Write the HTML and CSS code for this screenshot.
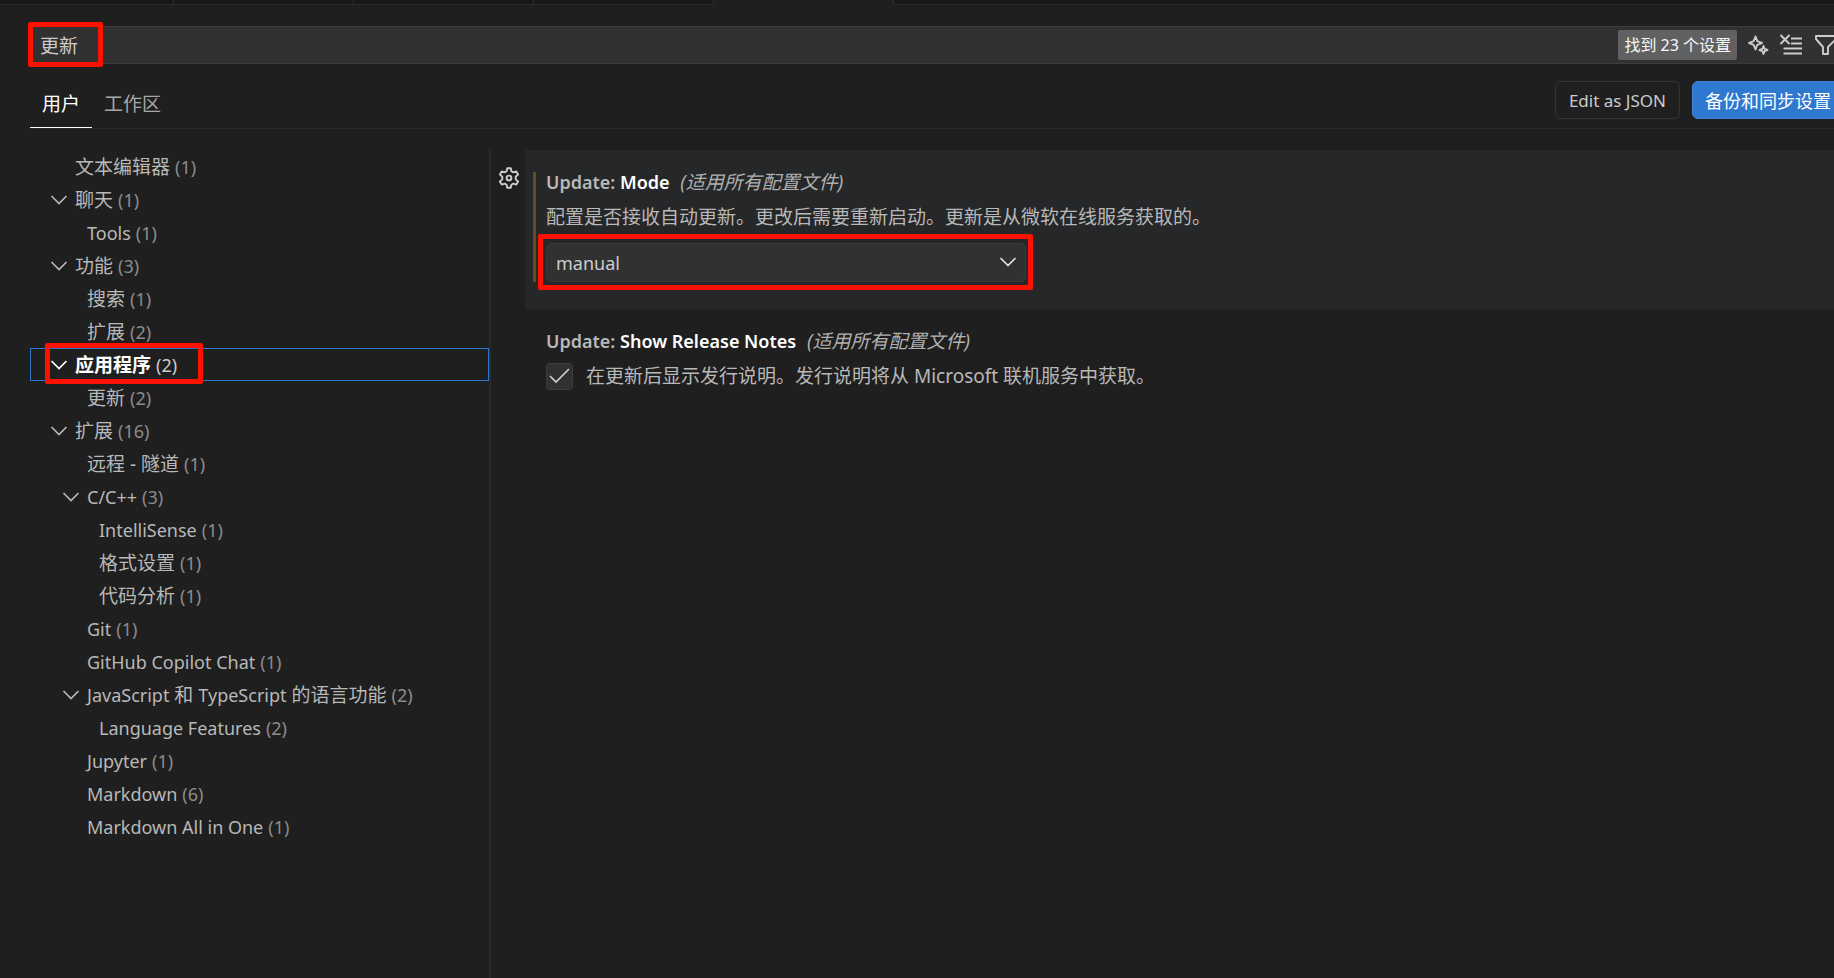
FILE: index.html
```html
<!DOCTYPE html>
<html lang="zh-CN">
<head>
<meta charset="utf-8">
<title>设置</title>
<link rel="stylesheet" href="styles.css">
</head>
<body>
<svg class="defs" aria-hidden="true">
  <symbol id="chevron" viewBox="0 0 24 24"><path d="M4.500 8l7.500 7.500L19.500 8" fill="none" stroke="currentColor" stroke-width="1.700"/></symbol>
</svg>
<div class="editor">
  <div class="tabs">
    <span class="tab tab-first"></span><span class="tab"></span><span class="tab"></span><span class="tab"></span><span class="tab tab-active"></span><span class="tab-rest"></span>
  </div>
  <header class="header">
    <div class="search">
      <input class="search-input" type="text" value="更新" aria-label="搜索设置">
      <span class="count-badge">找到 23 个设置</span>
      <button class="icon-button" aria-label="AI 搜索">
        <svg viewBox="0 0 24 24"><path d="M8.500 3.500L10.300 8.200L15 10L10.300 11.800L8.500 16.500L6.700 11.800L2 10L6.700 8.200ZM16.500 13L17.600 15.900L20.500 17L17.600 18.100L16.500 21L15.400 18.100L12.500 17L15.400 15.900Z" fill="none" stroke="currentColor" stroke-width="1.900" stroke-linejoin="round"/></svg>
      </button>
      <button class="icon-button" aria-label="清除搜索结果">
        <svg viewBox="0 0 24 24"><path d="M1.500 2l9 9M10.500 2l-9 9M12 5.500h11M12 10.500h11M4.500 15.500h18.500M4.500 20.500h18.500" fill="none" stroke="currentColor" stroke-width="2"/></svg>
      </button>
      <button class="icon-button icon-filter" aria-label="筛选设置">
        <svg viewBox="0 0 24 24"><path d="M2 3h20v3l-8 8v7h-5v-7L2 6z" fill="none" stroke="currentColor" stroke-width="1.900" stroke-linejoin="round"/></svg>
      </button>
      <span class="marker marker-search"></span>
    </div>
    <div class="scope-bar">
      <nav class="scopes">
        <a class="scope scope-active" href="#user">用户</a>
        <a class="scope" href="#workspace">工作区</a>
      </nav>
      <div class="actions">
        <button class="button">Edit as JSON</button>
        <button class="button button-primary">备份和同步设置</button>
      </div>
    </div>
  </header>
  <div class="body">
    <ul class="toc">
      <li class="row"><span class="twist"></span><span>文本编辑器</span><span class="num">(1)</span></li>
      <li class="row"><svg class="twist"><use href="#chevron"/></svg><span>聊天</span><span class="num">(1)</span></li>
      <li class="row level-1"><span class="twist"></span><span class="latin">Tools</span><span class="num">(1)</span></li>
      <li class="row"><svg class="twist"><use href="#chevron"/></svg><span>功能</span><span class="num">(3)</span></li>
      <li class="row level-1"><span class="twist"></span><span>搜索</span><span class="num">(1)</span></li>
      <li class="row level-1"><span class="twist"></span><span>扩展</span><span class="num">(2)</span></li>
      <li class="row row-selected"><svg class="twist"><use href="#chevron"/></svg><b>应用程序</b><span class="num">(2)</span><span class="marker marker-row"></span></li>
      <li class="row level-1"><span class="twist"></span><span>更新</span><span class="num">(2)</span></li>
      <li class="row"><svg class="twist"><use href="#chevron"/></svg><span>扩展</span><span class="num">(16)</span></li>
      <li class="row level-1"><span class="twist"></span><span>远程 - 隧道</span><span class="num">(1)</span></li>
      <li class="row level-1"><svg class="twist"><use href="#chevron"/></svg><span class="latin">C/C++</span><span class="num">(3)</span></li>
      <li class="row level-2"><span class="twist"></span><span class="latin">IntelliSense</span><span class="num">(1)</span></li>
      <li class="row level-2"><span class="twist"></span><span>格式设置</span><span class="num">(1)</span></li>
      <li class="row level-2"><span class="twist"></span><span>代码分析</span><span class="num">(1)</span></li>
      <li class="row level-1"><span class="twist"></span><span class="latin">Git</span><span class="num">(1)</span></li>
      <li class="row level-1"><span class="twist"></span><span class="latin">GitHub Copilot Chat</span><span class="num">(1)</span></li>
      <li class="row level-1"><svg class="twist"><use href="#chevron"/></svg><span><span class="latin">JavaScript</span> 和 <span class="latin">TypeScript</span> 的语言功能</span><span class="num">(2)</span></li>
      <li class="row level-2"><span class="twist"></span><span class="latin">Language Features</span><span class="num">(2)</span></li>
      <li class="row level-1"><span class="twist"></span><span class="latin">Jupyter</span><span class="num">(1)</span></li>
      <li class="row level-1"><span class="twist"></span><span class="latin">Markdown</span><span class="num">(6)</span></li>
      <li class="row level-1"><span class="twist"></span><span class="latin">Markdown All in One</span><span class="num">(1)</span></li>
    </ul>
    <main class="settings">
      <section class="setting">
        <button class="gear" aria-label="更多操作">
          <svg viewBox="0 0 24 24"><path d="M10.200 2.200h3.600l.600 3.100 1.900 1.100 3-1 1.800 3.100-2.400 2.100v2.800l2.400 2.100-1.800 3.100-3-1-1.900 1.100-.600 3.100h-3.600l-.600-3.100-1.900-1.100-3 1-1.800-3.100 2.400-2.100v-2.800L2.900 8.500l1.800-3.100 3 1 1.900-1.100z" fill="none" stroke="currentColor" stroke-width="1.900" stroke-linejoin="round"/><circle cx="12" cy="12" r="2.400" fill="none" stroke="currentColor" stroke-width="1.900"/></svg>
        </button>
        <div class="card card-focused">
          <div class="modified">
            <h2 class="title"><span class="category">Update:</span> <label for="mode">Mode</label> <em class="scope-note">(适用所有配置文件)</em></h2>
            <p class="description">配置是否接收自动更新。更改后需要重新启动。更新是从微软在线服务获取的。</p>
            <div class="select-box">
              <select class="select" id="mode"><option>manual</option></select>
              <svg class="select-arrow"><use href="#chevron"/></svg>
              <span class="marker marker-select"></span>
            </div>
          </div>
        </div>
      </section>
      <section class="setting">
        <div class="card">
          <h2 class="title"><span class="category">Update:</span> Show Release Notes <em class="scope-note">(适用所有配置文件)</em></h2>
          <div class="check-line">
            <input class="check" type="checkbox" id="notes" checked>
            <label class="description" for="notes">在更新后显示发行说明。发行说明将从 Microsoft 联机服务中获取。</label>
          </div>
        </div>
      </section>
    </main>
  </div>
</div>
</body>
</html>
```
FILE: styles.css
```css
* { box-sizing: border-box; }

body {
  margin: 0;
  background: #1f1f1f;
  color: #b8b8b8;
  font: 19px/33px "Noto Sans", "Noto Sans CJK SC", sans-serif;
  overflow: hidden;
}

button, input, select { font-family: inherit; color: inherit; margin: 0; }
.defs { display: none; }
.latin, .num { font-size: 18px; }

.editor { display: flex; flex-direction: column; height: 100vh; }

.tabs { display: flex; height: 5px; }
.tab { flex: 0 0 180px; background: #181818; border: solid #2b2b2b; border-width: 0 1px 1px 0; }
.tab-first { flex-basis: 174px; }
.tab-active { background: #1f1f1f; border-bottom: 0; }
.tab-rest { flex: 1; background: #181818; border-bottom: 1px solid #2b2b2b; }

.header { padding: 21px 0 0 30px; }
.search {
  position: relative;
  display: flex;
  align-items: center;
  height: 38px;
  background: #313131;
  border: solid #3c3c3c;
  border-width: 1px 0 1px 1px;
}
.search-input {
  flex: 1;
  min-width: 0;
  height: 36px;
  padding: 0 9px;
  background: none;
  border: 0;
  outline: 0;
  color: #cccccc;
  font-size: 19px;
}
.count-badge {
  margin-right: 10px;
  padding: 0 6px;
  background: #616161;
  border-radius: 2px;
  color: #f8f8f8;
  font-size: 16px;
  line-height: 30px;
  white-space: nowrap;
}
.icon-button { flex: none; width: 24px; height: 24px; margin-right: 8px; padding: 0; background: none; border: 0; color: #cccccc; }
.icon-button svg, .gear svg { display: block; width: 24px; height: 24px; }
.icon-filter { margin: 0 -4px 0 3px; }

.scope-bar { display: flex; justify-content: space-between; height: 65px; border-bottom: 1px solid #2b2b2b; }
.scopes { display: flex; align-items: flex-end; }
.scope { padding: 0 12px; border-bottom: 1px solid transparent; color: #a8a8a8; line-height: 46px; text-decoration: none; }
.scope-active { color: #ffffff; border-color: #ffffff; }
.actions { display: flex; gap: 12px; margin: 17px -10px 0 0; }
.button {
  height: 38px;
  padding: 0 13px;
  background: none;
  border: 1px solid #333333;
  border-radius: 6px;
  color: #cccccc;
  font-size: 17px;
  white-space: nowrap;
}
.button-primary { padding: 0 12px; background: #2f78d0; border-color: #3f84d8; color: #ffffff; font-size: 18px; }

.body { display: flex; flex: 1; min-height: 0; padding: 21px 0 0 30px; }
.toc { flex: 0 0 461px; margin: 0; padding: 0; border-right: 2px solid #2b2b2b; list-style: none; }
.row { position: relative; display: flex; align-items: center; height: 33px; padding-left: 17px; white-space: nowrap; }
.row > :not(.twist) { padding-top: 2px; }
.level-1 { padding-left: 29px; }
.level-2 { padding-left: 41px; }
.twist { flex: none; width: 24px; height: 24px; margin-right: 4px; }
.num { margin-left: 5px; color: #8c8c8c; }
.row-selected { color: #ffffff; outline: 1px solid #2f78d0; outline-offset: -1px; }
.row-selected .num { color: #cccccc; }

.settings { flex: 1; min-width: 0; }
.setting { display: flex; padding-left: 34px; position: relative; }
.gear { position: absolute; left: 6px; top: 16px; width: 24px; height: 24px; padding: 0; background: none; border: 0; color: #cccccc; }
.card { flex: 1; height: 159px; padding: 22px 8px 0 21px; }
.card-focused { background: #262729; }
.modified { border-left: 3px solid #664d2a; margin-left: -13px; padding-left: 10px; height: 110px; }
.title { margin: 0; color: #ffffff; font-size: 18px; font-weight: 600; line-height: 20px; white-space: nowrap; }
.category { color: #b8b8b8; }
.scope-note { margin-left: 6px; color: #b0b0b0; font-size: 19px; font-weight: 400; }
.description { margin: 0; line-height: 30px; white-space: nowrap; }
p.description { padding: 10px 0 11px; }
.select-box { position: relative; width: 480px; height: 39px; }
.select {
  width: 100%;
  height: 100%;
  padding: 0 9px;
  appearance: none;
  background: #313131;
  border: 1px solid #3c3c3c;
  border-radius: 6px;
  outline: 0;
  color: #cccccc;
  font-size: 18px;
}
.select-arrow { position: absolute; right: 6px; top: 7px; width: 24px; height: 24px; color: #e0e0e0; pointer-events: none; }
.check-line { display: flex; align-items: center; gap: 13px; padding-top: 10px; }
.check {
  width: 27px;
  height: 27px;
  appearance: none;
  background: #313131 url("data:image/svg+xml,%3Csvg xmlns='http://www.w3.org/2000/svg' viewBox='0 0 25 25'%3E%3Cpath d='M3 12l6 6L22 5' fill='none' stroke='%23cccccc' stroke-width='1.700'/%3E%3C/svg%3E") center / contain no-repeat;
  border: 1px solid #3c3c3c;
  border-radius: 4px;
}

.marker { position: absolute; border: 5px solid #ff1100; border-radius: 2px; pointer-events: none; }
.marker-search { left: -3px; top: -5px; width: 75px; height: 45px; }
.marker-row { left: 15px; top: -5px; width: 158px; height: 41px; }
.marker-select { left: -8px; top: -9px; width: 495px; height: 56px; }
```
